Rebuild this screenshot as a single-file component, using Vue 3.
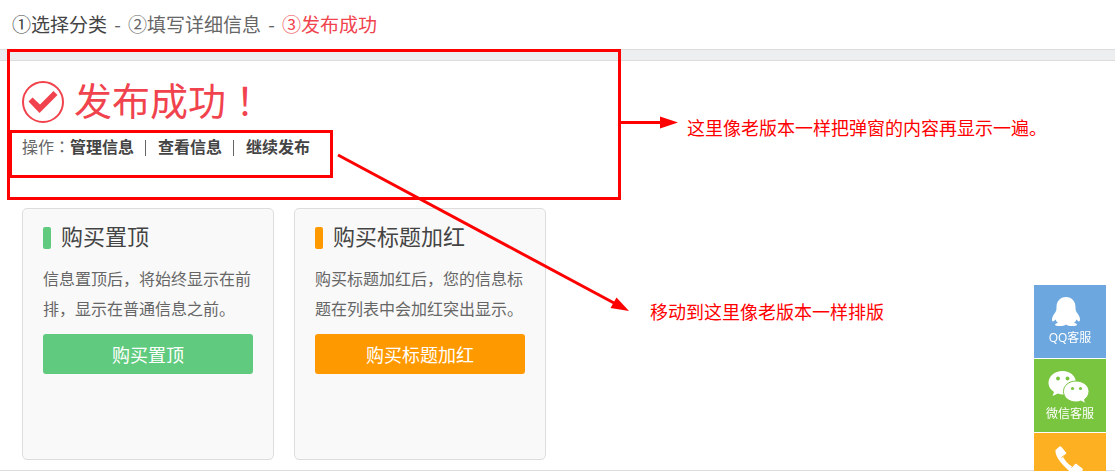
<script setup>
const steps = [
  { mark: '①', name: '选择分类', state: 'done' },
  { mark: '②', name: '填写详细信息', state: 'next' },
  { mark: '③', name: '发布成功', state: 'active' },
]
const actions = ['管理信息', '查看信息', '继续发布']
const offers = [
  { title: '购买置顶', text: '信息置顶后，将始终显示在前排，显示在普通信息之前。', tone: 'green' },
  { title: '购买标题加红', text: '购买标题加红后，您的信息标题在列表中会加红突出显示。', tone: 'orange' },
]
</script>

<template>
  <div class="page">
    <header class="steps">
      <template v-for="(step, i) in steps" :key="step.name">
        <span v-if="i" class="dash">-</span>
        <span :class="step.state">{{ step.mark }}{{ step.name }}</span>
      </template>
    </header>

    <main class="content">
      <section class="result">
        <h1 class="title">
          <svg class="tick" viewBox="0 0 42 42" aria-hidden="true">
            <circle cx="21" cy="21" r="20" fill="none" stroke="#f0434d" stroke-width="2" />
            <path d="M6.5 20.5 L10.5 16.500 L18 23.5 L31.5 10 L35.5 14 L17.500 32 Z" fill="#f0434d" />
          </svg>
          <span>发布成功<span class="mid">！</span></span>
        </h1>
        <nav class="actions">
          <span>操作<span class="mid">：</span></span>
          <template v-for="(action, i) in actions" :key="action">
            <i v-if="i" class="bar"></i>
            <a href="#">{{ action }}</a>
          </template>
        </nav>
      </section>

      <section class="offers">
        <article v-for="offer in offers" :key="offer.title" class="card" :class="offer.tone">
          <h2>{{ offer.title }}</h2>
          <p>{{ offer.text }}</p>
          <button type="button">{{ offer.title }}</button>
        </article>
      </section>
    </main>

    <aside class="service">
      <a href="#" class="qq">
        <svg width="36" height="32" viewBox="0 0 36 32" fill="#fff" aria-hidden="true">
          <path d="M14 1 C8 1 4.500 5.500 4.500 11 C4.500 13 4.500 14 3.500 16 C1.500 18.500 0 21 0 23.500 C0 26 1.500 26 3.500 23.500 C4 25 5 26.200 6 27 C4 27.300 3 28 3 28.700 C3 30.500 12 30.500 14 28.500 C16 30.500 25 30.500 25 28.700 C25 28 24 27.300 22 27 C23 26.200 24 25 24.500 23.500 C26.500 26 28 26 28 23.500 C28 21 26.500 18.500 24.500 16 C23.500 14 23.500 13 23.500 11 C23.500 5.500 20 1 14 1 Z" />
        </svg>
        <span>QQ客服</span>
      </a>
      <a href="#" class="wechat">
        <svg width="44" height="34" viewBox="0 0 44 34" aria-hidden="true">
          <path d="M14.500 1 C6.500 1 0.500 6 0.500 13 C0.500 16.500 2.500 19.500 6 22 L4.500 26 L10 23.500 C12 24.500 14 24.700 16 24.500 C22.500 24 28 19 28 13 C28 6 22.500 1 14.500 1 Z" fill="#fff" />
          <path d="M28 11 C21 11 15.500 15.500 15.500 21.500 C15.500 27.500 21 32 28 32 C30 32 31.500 31.500 33 31 L37.500 33.500 L36.500 29.500 C39 27.500 41 25 41 21.500 C41 15.500 35 11 28 11 Z" fill="#fff" stroke="#7ac540" stroke-width="1" />
          <g fill="#7ac540">
            <circle cx="10" cy="8.500" r="1.900" /><circle cx="19.500" cy="8.500" r="1.900" />
            <circle cx="24.500" cy="18.500" r="1.600" /><circle cx="32.500" cy="18.500" r="1.600" />
          </g>
        </svg>
        <span>微信客服</span>
      </a>
      <a href="#" class="phone" aria-label="电话">
        <svg width="30" height="30" viewBox="0 0 30 30" fill="#fff" aria-hidden="true">
          <path d="M0.500 4 L4.500 0.500 Q5.500 0 6.500 1 L11 6.500 Q12 7.500 11 8.500 L8 11 C10 14.500 13 18 17 20.500 L19.500 18 Q20.500 17 21.500 18 L27.500 22.500 Q28.500 23.500 27.500 24.500 L24 28 C20 29.500 15 26.500 10 21 C4 15 0 9 0.500 4 Z" />
          <path d="M6.500 11.500 L12 7.500 M16.500 21.500 L20.500 17" fill="none" stroke="#fdb022" stroke-width="1" />
        </svg>
      </a>
    </aside>

    <div class="notes">
      <div class="frame outer"></div>
      <div class="frame inner"></div>
      <svg class="arrows" width="640" height="320" viewBox="0 0 640 320" aria-hidden="true">
        <g stroke="#f00" stroke-width="3">
          <path d="M620 122.500 H662" />
          <path d="M338 155 L614 303" />
        </g>
        <path d="M660 116.500 L678 122.500 L660 128.500 Z M616.500 297.500 L629 311 L610.500 308 Z" fill="#f00" />
      </svg>
      <p class="note first">这里像老版本一样把弹窗的内容再显示一遍。</p>
      <p class="note second">移动到这里像老版本一样排版</p>
    </div>
  </div>
</template>

<style>
body {
  margin: 0;
  background: #fff;
}
</style>

<style scoped>
.page {
  position: relative;
  color: #666;
  font-family: "Liberation Sans", "Noto Sans CJK SC", sans-serif;
  font-size: 16px;
}
.steps {
  display: flex;
  padding: 10px 12px 11px;
  font-family: "Noto Sans CJK SC", sans-serif;
  font-size: 19px;
  line-height: 28px;
}
.dash {
  width: 21px;
  text-align: center;
}
.done {
  color: #444;
}
.active {
  color: #f0434d;
}
.content {
  border-top: 11px solid #edeef0;
  border-bottom: 1px solid #ddd;
  box-shadow: inset 0 1px #ddd;
  padding: 20px 22px 10px;
  position: relative;
}
.content::before {
  content: "";
  position: absolute;
  inset: -11px 0 auto;
  height: 1px;
  background: #ddd;
}
.title {
  display: flex;
  align-items: center;
  gap: 10px;
  margin: 0;
  color: #f0434d;
  font-size: 38px;
  font-weight: 400;
  line-height: 44px;
}
.tick {
  width: 42px;
  height: 42px;
}
.mid {
  font-family: "Noto Sans CJK JP", sans-serif;
  line-height: 0;
}
.actions {
  display: flex;
  align-items: center;
  margin-top: 12px;
  line-height: 24px;
}
.actions a {
  color: #444;
  font-weight: 700;
  text-decoration: none;
}
.bar {
  width: 1px;
  height: 16px;
  margin: 0 12px 0 11px;
  background: #666;
}
.offers {
  display: flex;
  flex-wrap: wrap;
  gap: 20px;
  margin-top: 48px;
}
.card {
  box-sizing: border-box;
  width: 252px;
  min-height: 252px;
  padding: 13px 20px 20px;
  border: 1px solid #ddd;
  border-radius: 5px;
  background: #f9f9f9;
}
.card h2 {
  display: flex;
  align-items: center;
  gap: 10px;
  margin: 0 0 11px;
  color: #444;
  font-size: 22px;
  font-weight: 400;
  line-height: 32px;
}
.card h2::before {
  content: "";
  width: 8px;
  height: 22px;
  border-radius: 2px;
  background: var(--tone);
}
.card p {
  margin: 0 0 9px;
  line-height: 30px;
}
.card button {
  display: block;
  width: 100%;
  height: 40px;
  padding: 0;
  border: 0;
  border-radius: 3px;
  background: var(--tone);
  color: #fff;
  font-family: inherit;
  font-size: 18px;
  cursor: pointer;
}
.green {
  --tone: #60ca7e;
}
.orange {
  --tone: #ff9900;
}
.service {
  position: fixed;
  top: 285px;
  right: 9px;
  display: grid;
  gap: 1px;
  width: 72px;
}
.service a {
  display: flex;
  flex-direction: column;
  align-items: center;
  box-sizing: border-box;
  height: 73px;
  padding-top: 11px;
  color: #fff;
  font-family: "Open Sans", "Noto Sans CJK SC", sans-serif;
  font-size: 12px;
  line-height: 20px;
  text-decoration: none;
}
.qq {
  background: #6ca8df;
}
.wechat {
  background: #7ac540;
}
.service .phone {
  padding-top: 13px;
  background: #fdb022;
}
.notes {
  position: absolute;
  top: 0;
  left: 0;
  color: #f00;
  pointer-events: none;
}
.frame {
  position: absolute;
  box-sizing: border-box;
  border: 3px solid #f00;
}
.outer {
  top: 49px;
  left: 7px;
  width: 614px;
  height: 151px;
}
.inner {
  top: 130px;
  left: 9px;
  width: 324px;
  height: 48px;
}
.arrows {
  position: absolute;
  top: 0;
  left: 0;
  overflow: visible;
}
.note {
  position: absolute;
  margin: 0;
  font-size: 18px;
  line-height: 26px;
  white-space: nowrap;
}
.first {
  top: 116px;
  left: 687px;
}
.second {
  top: 300px;
  left: 650px;
}
</style>
